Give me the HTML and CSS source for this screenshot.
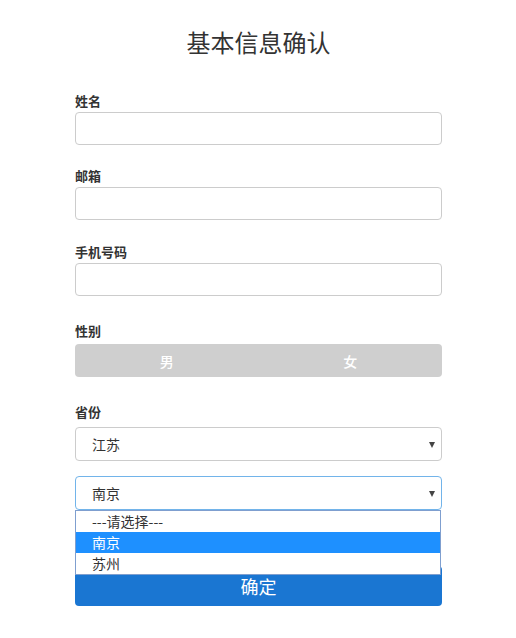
FILE: index.html
```html
<!DOCTYPE html>
<html lang="zh-CN">
<head>
<meta charset="utf-8">
<title>基本信息确认</title>
<link rel="stylesheet" href="styles.css">
</head>
<body>
<div class="page">
  <h1 class="title">基本信息确认</h1>
  <form class="form">
    <div class="field">
      <label class="label">姓名</label>
      <input class="input" type="text">
    </div>
    <div class="field">
      <label class="label">邮箱</label>
      <input class="input" type="text">
    </div>
    <div class="field field-phone">
      <label class="label">手机号码</label>
      <input class="input" type="text">
    </div>
    <div class="field field-gender">
      <label class="label">性别</label>
      <div class="toggle">
        <span class="toggle-opt">男</span>
        <span class="toggle-opt">女</span>
      </div>
    </div>
    <div class="field field-province">
      <label class="label">省份</label>
      <div class="select">
        <span class="select-value">江苏</span>
      </div>
    </div>
    <div class="field field-city">
      <div class="select select-focus">
        <span class="select-value">南京</span>
      </div>
      <ul class="dropdown">
        <li class="option">---请选择---</li>
        <li class="option option-active">南京</li>
        <li class="option">苏州</li>
      </ul>
    </div>
    <div class="submit">确定</div>
  </form>
</div>
</body>
</html>
```
FILE: styles.css
```css
* { box-sizing: border-box; }
body {
  margin: 0;
  background: #fff;
  font-family: "Noto Sans CJK SC", "Noto Sans", sans-serif;
  color: #333;
}
.page {
  width: 367px;
  margin-left: 75px;
  padding-top: 26px;
}
.title {
  margin: 0;
  font-size: 24px;
  font-weight: normal;
  line-height: 32px;
  text-align: center;
  color: #333;
}
.form {
  margin-top: 35px;
  display: flex;
  flex-direction: column;
}
.field {
  position: relative;
  display: flex;
  flex-direction: column;
  margin-bottom: 23px;
}
.field-phone { margin-top: 1px; }
.label {
  font-size: 13px;
  font-weight: bold;
  line-height: 16px;
  margin-bottom: 3px;
  color: #333;
}
.input {
  height: 33px;
  border: 1px solid #ccc;
  border-radius: 4px;
  background: #fff;
  margin: 0;
}
.field-gender { margin-top: 4px; margin-bottom: 27px; }
.field-gender .label { margin-bottom: 5px; }
.toggle {
  display: flex;
  height: 33px;
  background: #cfcfcf;
  border-radius: 4px;
}
.toggle-opt {
  flex: 1;
  display: flex;
  align-items: center;
  justify-content: center;
  color: #fff;
  font-size: 14px;
  font-weight: 500;
}
.field-province { margin-bottom: 15px; }
.field-province .label { margin-bottom: 7px; }
.select {
  position: relative;
  height: 34px;
  border: 1px solid #ccc;
  border-radius: 4px;
  display: flex;
  align-items: center;
  padding-left: 16px;
  font-size: 14px;
  color: #333;
}
.select::after {
  content: "";
  position: absolute;
  right: 6px;
  top: 14px;
  border-left: 3.5px solid transparent;
  border-right: 3.5px solid transparent;
  border-top: 6px solid #444;
}
.select-focus { border-color: #72b4ea; }
.field-city { margin-bottom: 56px; }
.dropdown {
  position: absolute;
  left: 0;
  top: 34px;
  width: 366px;
  margin: 0;
  padding: 0;
  list-style: none;
  background: #fff;
  border: 1px solid #7f9fcf;
  z-index: 2;
}
.option {
  height: 21px;
  line-height: 21px;
  padding-left: 16px;
  font-size: 14px;
  color: #333;
}
.option-active {
  background: #1e90ff;
  color: #fff;
}
.submit {
  height: 40px;
  background: #1a76d2;
  border-radius: 4px;
  color: #fff;
  font-size: 18px;
  display: flex;
  align-items: center;
  justify-content: center;
}
```
